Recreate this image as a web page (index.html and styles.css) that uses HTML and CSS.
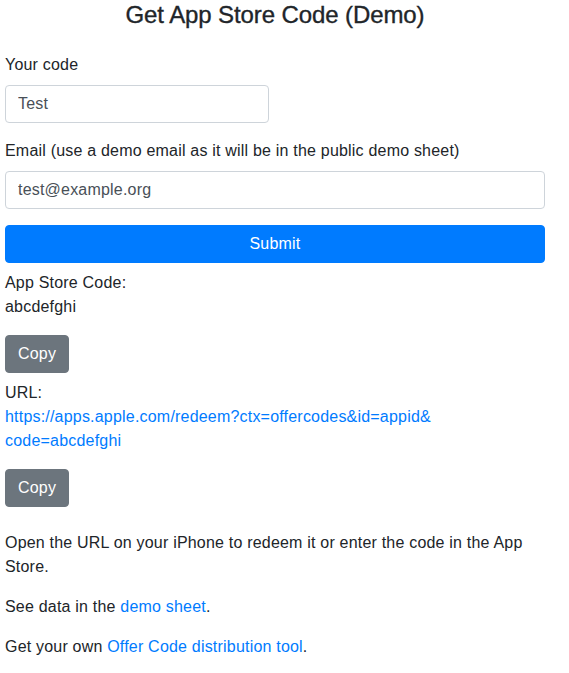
FILE: index.html
```html
<!DOCTYPE html>
<html lang="en">
<head>
<meta charset="utf-8">
<title>Get App Store Code (Demo)</title>
<link rel="stylesheet" href="styles.css">
</head>
<body>
<main class="page">
  <h1 class="title">Get App Store Code (Demo)</h1>
  <form class="form">
    <div class="form-group">
      <label class="label" for="code">Your code</label>
      <input class="input input-short" id="code" type="text" value="Test">
    </div>
    <div class="form-group">
      <label class="label" for="email">Email (use a demo email as it will be in the public demo sheet)</label>
      <input class="input" id="email" type="text" value="test@example.org">
    </div>
    <button class="btn btn-primary" type="button">Submit</button>
  </form>
  <section class="result">
    <div class="result-label">App Store Code:</div>
    <p class="result-value">abcdefghi</p>
    <button class="btn btn-secondary" type="button">Copy</button>
    <div class="result-label url-label">URL:</div>
    <p class="result-value"><a class="link" href="#">https://apps.apple.com/redeem?ctx=offercodes&amp;id=appid&amp;<br>code=abcdefghi</a></p>
    <button class="btn btn-secondary" type="button">Copy</button>
  </section>
  <section class="notes">
    <p class="note">Open the URL on your iPhone to redeem it or enter the code in the App Store.</p>
    <p class="note">See data in the <a class="link" href="#">demo sheet</a>.</p>
    <p class="note">Get your own <a class="link" href="#">Offer Code distribution tool</a>.</p>
  </section>
</main>
</body>
</html>
```
FILE: styles.css
```css
* { box-sizing: border-box; }
html, body { margin: 0; padding: 0; background: #fff; }
body {
  font-family: "Liberation Sans", Arial, sans-serif;
  font-size: 16px;
  line-height: 24px;
  letter-spacing: 0.2px;
  color: #212529;
}
.page {
  width: 540px;
  margin-left: 5px;
  display: flex;
  flex-direction: column;
}
.title {
  margin: 0 0 24px;
  font-size: 24px;
  line-height: 29px;
  font-weight: 500;
  letter-spacing: -0.1px;
  -webkit-text-stroke: 0.35px #212529;
  text-align: center;
}
.form { display: flex; flex-direction: column; }
.form-group {
  display: flex;
  flex-direction: column;
  align-items: flex-start;
  margin-bottom: 16px;
}
.label { display: block; margin-bottom: 8px; }
.input {
  width: 100%;
  height: 38px;
  padding: 6px 12px;
  font: inherit;
  letter-spacing: inherit;
  color: #495057;
  background: #fff;
  border: 1px solid #ced4da;
  border-radius: 4px;
}
.input-short { width: 264px; }
.btn {
  display: inline-block;
  height: 38px;
  padding: 6px 12px;
  font: inherit;
  letter-spacing: inherit;
  color: #fff;
  border: 1px solid transparent;
  border-radius: 4px;
  text-align: center;
}
.btn-primary { width: 100%; background: #007bff; border-color: #007bff; }
.btn-secondary { align-self: flex-start; background: #6c757d; border-color: #6c757d; }
.result { display: flex; flex-direction: column; margin-top: 8px; }
.url-label { margin-top: 8px; }
.result-value { margin: 0 0 16px; }
.link { color: #007bff; text-decoration: none; }
.notes { margin-top: 24px; }
.note { margin: 0 0 16px; }
```
